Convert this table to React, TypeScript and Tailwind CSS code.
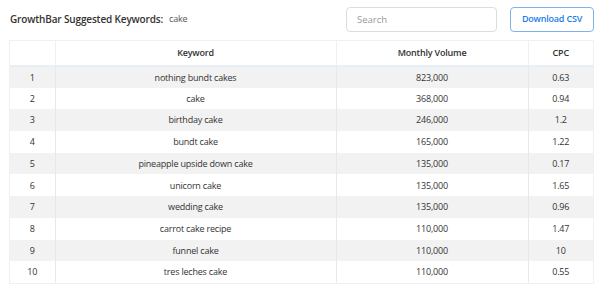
const rows: [number, string, string, string][] = [
  [1, 'nothing bundt cakes', '823,000', '0.63'],
  [2, 'cake', '368,000', '0.94'],
  [3, 'birthday cake', '246,000', '1.2'],
  [4, 'bundt cake', '165,000', '1.22'],
  [5, 'pineapple upside down cake', '135,000', '0.17'],
  [6, 'unicorn cake', '135,000', '1.65'],
  [7, 'wedding cake', '135,000', '0.96'],
  [8, 'carrot cake recipe', '110,000', '1.47'],
  [9, 'funnel cake', '110,000', '10'],
  [10, 'tres leches cake', '110,000', '0.55'],
];

export default function App() {
  return (
    <div className="w-[600px] h-[289px] bg-white font-['Open_Sans',sans-serif] text-[#333]">
      <div className="flex items-center h-[37px] pl-[10px] pr-[6px] pt-[1px]">
        <span className="text-[10px] tracking-[-0.15px] font-semibold text-[#333]">GrowthBar Suggested Keywords:</span>
        <span className="ml-[6px] text-[9px] tracking-[-0.2px] text-[#555]">cake</span>
        <input
          className="ml-auto w-[151px] h-[25px] rounded-[4px] border border-[#ddd] px-[10px] text-[9.5px] outline-none placeholder:text-[#999]"
          placeholder="Search"
        />
        <button className="ml-[13px] w-[84px] h-[25px] rounded-[4px] border border-[#7fb3f0] text-[9px] tracking-[-0.2px] font-semibold text-[#1a7de8]">
          Download CSV
        </button>
      </div>
      <div className="ml-[9px] mt-[3px] w-[585px] border border-[#eef0f2]">
        <table className="w-full border-collapse text-[9px] tracking-[-0.2px] text-[#333]">
          <thead>
            <tr className="h-[25px] border-b-2 border-[#e8eef5]">
              <th className="w-[45px] border-r border-[#eef0f2]"></th>
              <th className="w-[281px] border-r border-[#eef0f2] font-semibold">Keyword</th>
              <th className="w-[192px] border-r border-[#eef0f2] font-semibold">Monthly Volume</th>
              <th className="font-semibold">CPC</th>
            </tr>
          </thead>
          <tbody>
            {rows.map(([n, k, v, c]) => (
              <tr key={n} className={`h-[21.7px] ${n % 2 === 1 ? 'bg-[#f2f2f2]' : 'bg-white'}`}>
                <td className="text-center border-r border-[#e8e8e8]">{n}</td>
                <td className="text-center border-r border-[#e8e8e8]">{k}</td>
                <td className="text-center border-r border-[#e8e8e8]">{v}</td>
                <td className="text-center">{c}</td>
              </tr>
            ))}
          </tbody>
        </table>
      </div>
    </div>
  );
}
